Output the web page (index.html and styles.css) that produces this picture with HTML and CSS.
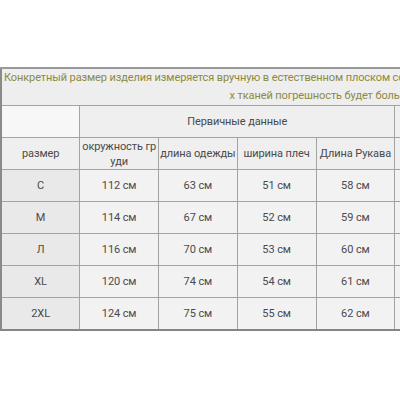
FILE: index.html
```html
<!DOCTYPE html>
<html lang="ru">
<head>
<meta charset="utf-8">
<link rel="stylesheet" href="styles.css">
</head>
<body>
<div class="sheet">
  <table class="size-table">
    <colgroup>
      <col class="c-narrow"><col class="c-narrow"><col class="c-narrow"><col class="c-narrow"><col class="c-narrow">
      <col class="c-extra"><col class="c-extra"><col class="c-extra"><col class="c-extra">
    </colgroup>
    <tr class="r-title">
      <td class="title" colspan="9"><span class="line1">Конкретный размер изделия измеряется вручную в естественном плоском состоянии, в зависимости от различных методов измерения и разны</span><br>х тканей погрешность будет больше или меньше 1-3 см</td>
    </tr>
    <tr class="r-group">
      <td class="blank"></td>
      <td class="head" colspan="4">Первичные данные</td>
      <td class="head" colspan="4"></td>
    </tr>
    <tr class="r-head">
      <td class="head">размер</td>
      <td class="head">окружность груди</td>
      <td class="head">длина одежды</td>
      <td class="head">ширина плеч</td>
      <td class="head">Длина Рукава</td>
      <td class="head"></td><td class="head"></td><td class="head"></td><td class="head"></td>
    </tr>
    <tr class="r-data">
      <td class="size">C</td><td>112 см</td><td>63 см</td><td>51 см</td><td>58 см</td><td></td><td></td><td></td><td></td>
    </tr>
    <tr class="r-data">
      <td class="size">M</td><td>114 см</td><td>67 см</td><td>52 см</td><td>59 см</td><td></td><td></td><td></td><td></td>
    </tr>
    <tr class="r-data">
      <td class="size">Л</td><td>116 см</td><td>70 см</td><td>53 см</td><td>60 см</td><td></td><td></td><td></td><td></td>
    </tr>
    <tr class="r-data">
      <td class="size">XL</td><td>120 см</td><td>74 см</td><td>54 см</td><td>61 см</td><td></td><td></td><td></td><td></td>
    </tr>
    <tr class="r-data last">
      <td class="size">2XL</td><td>124 см</td><td>75 см</td><td>55 см</td><td>62 см</td><td></td><td></td><td></td><td></td>
    </tr>
  </table>
</div>
</body>
</html>
```
FILE: styles.css
```css
html, body {
  margin: 0;
  padding: 0;
  overflow: hidden;
  background: #ffffff;
}
.sheet {
  padding-top: 67px;
  width: 800px;
}
.size-table {
  table-layout: fixed;
  border-collapse: collapse;
  width: 740px;
  font-family: Roboto, "Noto Sans", sans-serif;
  font-size: 11px;
  letter-spacing: -0.1px;
  color: #4a4a4a;
  border-left: 2px solid #8a8a8a;
  border-top: 2px solid #9a9a9a;
  border-bottom: 2px solid #858585;
}
.c-narrow { width: 78.75px; }
.c-extra { width: 86.5px; }
.size-table td {
  border: 1px solid #a3a3a3;
  text-align: center;
  vertical-align: middle;
  padding: 0;
  background: #f2f2f2;
  word-break: break-all;
  line-height: 15px;
}
.r-title td { height: 34px; }
.title {
  background: #eeeeee !important;
  color: #8b8a3d;
  line-height: 18px !important;
  padding: 0 2px !important;
}
.line1 { white-space: nowrap; }
.r-group td { height: 31px; }
.r-head td { height: 31px; }
.r-data td { height: 31px; }
.blank { background: #f7f7f7 !important; }
.head { background: #efefef !important; }
.size { background: #e9e9e9 !important; }
```
